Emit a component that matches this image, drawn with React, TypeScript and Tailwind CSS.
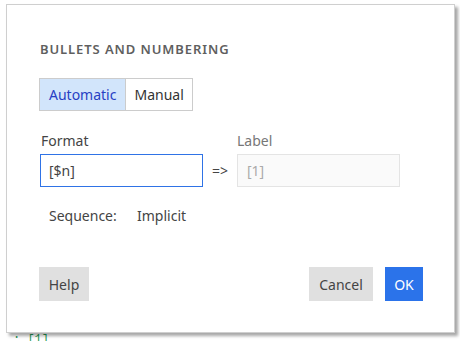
import React from "react";

const font = { fontFamily: '"Source Sans Pro", "Noto Sans", "Open Sans", sans-serif' };

const App: React.FC = () => {
  return (
    <div className="w-[460px] h-[341px] overflow-hidden bg-white pt-1 pl-1.5" style={font}>
      <div className="relative z-10 w-[449px] h-[329px] bg-white border border-[#cfcfcf] shadow-[3px_3px_3px_rgba(0,0,0,0.35)] pl-[32px] pr-[31px] pt-[36px] flex flex-col">
        <h2 className="text-[13px] font-semibold tracking-[0.07em] text-[#5f5f5f] leading-4 ml-px">
          BULLETS AND NUMBERING
        </h2>

        <div className="flex mt-[21px]">
          <button className="h-[33px] px-[9px] bg-[#d2e5fb] border border-[#cccccc] text-[14px] text-[#2740c4]">
            Automatic
          </button>
          <button className="h-[33px] px-[8px] bg-white border border-l-0 border-[#cccccc] text-[14px] text-[#333]">
            Manual
          </button>
        </div>

        <div className="flex items-end mt-[20px]">
          <div className="flex flex-col">
            <label className="text-[14px] text-[#444] leading-5 ml-[2px]">Format</label>
            <input
              defaultValue="[$n]"
              className="mt-[3px] ml-px w-[163px] h-[33px] px-2 border border-[#2f73e6] text-[14px] text-[#444] outline-none"
            />
          </div>
          <span className="w-[34px] h-[33px] flex items-center justify-center text-[14px] text-[#444]">=&gt;</span>
          <div className="flex flex-col">
            <label className="text-[14px] text-[#777] leading-5">Label</label>
            <input
              defaultValue="[1]"
              disabled
              className="mt-[3px] w-[163px] h-[33px] px-[9px] bg-[#fafafa] border border-[#e4e4e4] text-[14px] text-[#aaa] outline-none"
            />
          </div>
        </div>

        <div className="flex mt-[19px] ml-[10px] text-[14px] text-[#444] leading-5">
          <span className="w-[88px]">Sequence:</span>
          <span>Implicit</span>
        </div>

        <div className="flex mt-auto mb-[31px] items-center">
          <button className="h-[34px] w-[50px] bg-[#e0e0e0] text-[14px] text-[#444]">Help</button>
          <div className="flex-1" />
          <button className="h-[34px] w-[64px] bg-[#e0e0e0] text-[14px] text-[#444]">Cancel</button>
          <button className="h-[34px] w-[38px] ml-3 bg-[#2b73ea] text-[14px] text-white">OK</button>
        </div>
      </div>
      <div className="ml-[7px] -mt-[1px] text-[12px] leading-4 text-[#1f9a55]" style={{ fontFamily: '"Liberation Mono", monospace' }}>
        ; [1]
      </div>
    </div>
  );
};

export default App;
